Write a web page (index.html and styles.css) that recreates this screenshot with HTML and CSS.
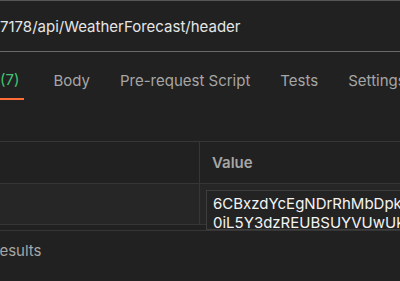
FILE: index.html
```html
<!DOCTYPE html>
<html>
<head>
<meta charset="utf-8">
<link rel="stylesheet" href="styles.css">
</head>
<body>
<div class="url-bar"><span class="url-text">7178/api/WeatherForecast/header</span></div>
<div class="tabs">
  <div class="tab active"><span class="count">(7)</span></div>
  <div class="tab">Body</div>
  <div class="tab">Pre-request Script</div>
  <div class="tab">Tests</div>
  <div class="tab">Settings</div>
</div>
<div class="table">
  <div class="cell head key"></div>
  <div class="cell head val">Value</div>
  <div class="cell row key"></div>
  <div class="cell row val">
    <div class="editor">6CBxzdYcEgNDrRhMbDpk<br>0iL5Y3dzREUBSUYVUwUk</div>
  </div>
</div>
<div class="spacer"></div>
<div class="results"><span class="results-text">Results</span></div>
</body>
</html>
```

FILE: styles.css
```css
html, body {
  margin: 0;
  padding: 0;
  background: #212121;
  width: 400px;
  height: 281px;
  overflow: hidden;
  font-family: Inter, "Noto Sans", sans-serif;
  font-size: 15px;
}
.url-bar {
  height: 50px;
  border-top: 1px solid #565656;
  border-bottom: 1px solid #6a6a6a;
  display: flex;
  align-items: center;
  padding-left: 0;
  box-sizing: content-box;
}
.url-text {
  color: #e6e6e6;
  margin-top: 1px;
}
.tabs {
  display: flex;
  height: 48px;
  align-items: stretch;
  white-space: nowrap;
}
.tab {
  color: #a6a6a6;
  display: flex;
  align-items: center;
  padding-top: 9px;
  margin-right: 30px;
}
.tab.active {
  border-bottom: 2px solid #ff6c37;
  padding-right: 5px;
  margin-right: 29px;
  height: 37px;
  box-sizing: content-box;
}
.count {
  color: #43c474;
  margin-left: 0;
}
.table {
  margin-top: 41px;
  border-top: 1px solid #363636;
  border-bottom: 1px solid #363636;
  display: grid;
  grid-template-columns: 200px 1fr;
}
.cell {
  border-right: 1px solid #363636;
}
.cell.val {
  border-right: none;
}
.head {
  height: 41px;
  border-bottom: 1px solid #363636;
  display: flex;
  align-items: center;
  color: #a6a6a6;
  font-weight: 600;
}
.head.val {
  padding-left: 12px;
}
.row {
  height: 40px;
  background: #262626;
}
.row.val {
  position: relative;
}
.editor {
  position: absolute;
  top: 6px;
  left: 6px;
  right: -2px;
  height: 40px;
  border: 1px solid #3e3e3e;
  background: #232323;
  color: #f4f4f4;
  line-height: 19px;
  padding: 3px 0 0 6px;
  box-sizing: border-box;
  overflow: hidden;
  white-space: nowrap;
  z-index: 2;
}
.spacer {
  height: 5px;
  border-bottom: 1px solid #363636;
}
.results {
  height: 38px;
  display: flex;
  align-items: center;
  overflow: hidden;
}
.results-text {
  color: #a6a6a6;
  margin-left: -10px;
}
```
